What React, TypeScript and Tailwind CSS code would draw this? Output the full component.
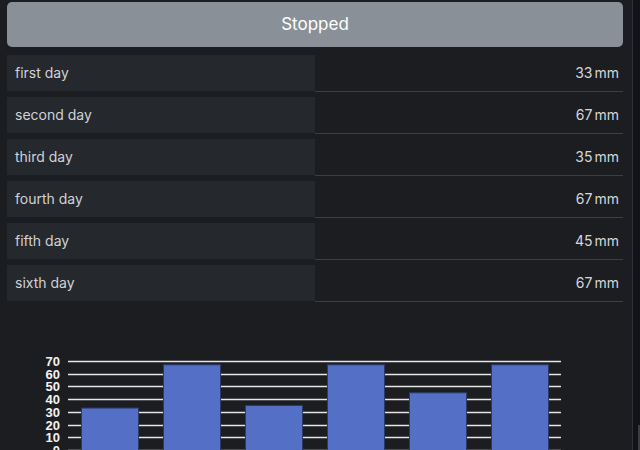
import React from "react";

const rows = [
  { label: "first day", value: 33 },
  { label: "second day", value: 67 },
  { label: "third day", value: 35 },
  { label: "fourth day", value: 67 },
  { label: "fifth day", value: 45 },
  { label: "sixth day", value: 67 },
];

function Chart() {
  const zeroY = 148;
  const scale = 89 / 70;
  const ticks = [0, 10, 20, 30, 40, 50, 60, 70];
  return (
    <svg width={632} height={200} className="block">
      {ticks.map((t) => {
        const y = Math.round(zeroY - t * scale) + 0.5;
        return (
          <g key={t}>
            <line x1={68} x2={561} y1={y} y2={y} stroke="#e6e6e6" strokeWidth={1.5} />
            <text
              x={60}
              y={y + 4.5}
              textAnchor="end"
              fill="#f2f2f2"
              fontSize={13}
              fontWeight={700}
              fontFamily="'Liberation Sans', Arial, sans-serif"
            >
              {t}
            </text>
          </g>
        );
      })}
      {rows.map((r, i) => {
        const x = 81 + i * 82;
        const top = zeroY - r.value * scale;
        return (
          <rect
            key={i}
            x={x + 0.5}
            y={top}
            width={57}
            height={zeroY - top + 40}
            fill="#5470c6"
            stroke="#2c3a66"
            strokeWidth={1}
          />
        );
      })}
    </svg>
  );
}

export default function App() {
  return (
    <div
      className="flex w-[640px] h-[450px] overflow-hidden bg-[#1b1d21]"
      style={{ fontFamily: "Inter, 'Noto Sans', sans-serif" }}
    >
      <div className="w-[632px] shrink-0 flex flex-col">
        <div className="pl-[7px] pr-[9px] pt-[2px]">
          <div className="h-[45px] rounded-[5px] bg-[#899097] flex items-center justify-center text-white text-[17px]">
            Stopped
          </div>
          <div className="mt-[8px] flex flex-col gap-[5px]">
            {rows.map((r) => (
              <div key={r.label} className="flex h-[37px] items-start">
                <div className="w-[308px] h-[36px] bg-[#25282d] flex items-center pl-[8px] pb-[1px] text-[14px] text-[#cfd2d7]">
                  {r.label}
                </div>
                <div className="flex-1 h-[37px] border-b border-[#3b3e44] flex items-center justify-end pr-[4px] pb-[2px] text-[14px] text-[#d4d7dc]">
                  <span>{r.value}</span>
                  <span className="ml-[2px]">mm</span>
                </div>
              </div>
            ))}
          </div>
        </div>
        <Chart />
      </div>
      <div className="w-px bg-[#2e3137] shrink-0" />
      <div className="flex-1 bg-[#121317] flex flex-col justify-end">
        <div className="h-[25px] ml-auto w-[2px] bg-[#3a3d42]" />
      </div>
    </div>
  );
}
